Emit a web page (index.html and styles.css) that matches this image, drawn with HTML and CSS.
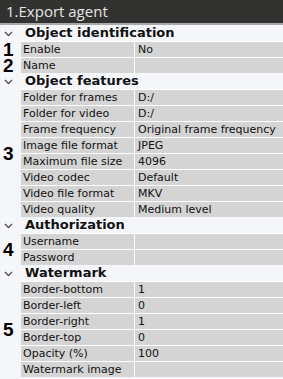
FILE: index.html
```html
<!DOCTYPE html>
<html lang="en">
<head>
  <meta charset="UTF-8" />
  <meta name="viewport" content="width=device-width, initial-scale=1.0">
  <title>Export agent</title>
  <link rel="stylesheet" href="styles.css">
</head>
<body>
  <div class="titlebar">1.Export agent</div>

  <div class="section">
    <div class="head"><span class="chev"><svg width="9" height="6" viewBox="0 0 9 6"><polyline points="1,1 4.5,4.5 8,1" /></svg></span>Object identification</div>
    <div class="group">
      <div class="num">1</div>
      <div class="rows">
        <div class="row"><div class="label">Enable</div><div class="value">No</div></div>
      </div>
    </div>
    <div class="group">
      <div class="num">2</div>
      <div class="rows">
        <div class="row"><div class="label">Name</div><div class="value"></div></div>
      </div>
    </div>
  </div>

  <div class="section">
    <div class="head"><span class="chev"><svg width="9" height="6" viewBox="0 0 9 6"><polyline points="1,1 4.5,4.5 8,1" /></svg></span>Object features</div>
    <div class="group">
      <div class="num">3</div>
      <div class="rows">
        <div class="row"><div class="label">Folder for frames</div><div class="value">D:/</div></div>
        <div class="row"><div class="label">Folder for video</div><div class="value">D:/</div></div>
        <div class="row"><div class="label">Frame frequency</div><div class="value">Original frame frequency</div></div>
        <div class="row"><div class="label">Image file format</div><div class="value">JPEG</div></div>
        <div class="row"><div class="label">Maximum file size</div><div class="value">4096</div></div>
        <div class="row"><div class="label">Video codec</div><div class="value">Default</div></div>
        <div class="row"><div class="label">Video file format</div><div class="value">MKV</div></div>
        <div class="row"><div class="label">Video quality</div><div class="value">Medium level</div></div>
      </div>
    </div>
  </div>

  <div class="section">
    <div class="head"><span class="chev"><svg width="9" height="6" viewBox="0 0 9 6"><polyline points="1,1 4.5,4.5 8,1" /></svg></span>Authorization</div>
    <div class="group">
      <div class="num">4</div>
      <div class="rows">
        <div class="row"><div class="label">Username</div><div class="value"></div></div>
        <div class="row"><div class="label">Password</div><div class="value"></div></div>
      </div>
    </div>
  </div>

  <div class="section">
    <div class="head"><span class="chev"><svg width="9" height="6" viewBox="0 0 9 6"><polyline points="1,1 4.5,4.5 8,1" /></svg></span>Watermark</div>
    <div class="group">
      <div class="num">5</div>
      <div class="rows">
        <div class="row"><div class="label">Border-bottom</div><div class="value">1</div></div>
        <div class="row"><div class="label">Border-left</div><div class="value">0</div></div>
        <div class="row"><div class="label">Border-right</div><div class="value">1</div></div>
        <div class="row"><div class="label">Border-top</div><div class="value">0</div></div>
        <div class="row"><div class="label">Opacity (%)</div><div class="value">100</div></div>
        <div class="row"><div class="label">Watermark image</div><div class="value"></div></div>
      </div>
    </div>
  </div>
</body>
</html>
```

FILE: styles.css
```css
* { margin: 0; padding: 0; box-sizing: border-box; }
body {
  background: #f4f6fa;
  font-family: "DejaVu Sans", Verdana, sans-serif;
  font-size: 11px;
  color: #111;
  width: 283px;
  overflow: hidden;
}
.titlebar {
  height: 23px;
  background: #323330;
  color: #e4e4e4;
  font-family: "Open Sans", sans-serif;
  font-size: 15px;
  line-height: 23px;
  padding-left: 6px;
  border-bottom: 2px solid #a9a9ac;
  box-sizing: content-box;
}
.head {
  height: 16px;
  display: flex;
  align-items: center;
  font-weight: bold;
  font-size: 13px;
  line-height: 16px;
  white-space: nowrap;
}
.chev {
  width: 25px;
  flex: none;
  display: flex;
  padding-left: 4px;
  padding-top: 1px;
}
.chev svg {
  fill: none;
  stroke: #555;
  stroke-width: 1.4;
}
.group {
  display: grid;
  grid-template-columns: 21px 1fr;
}
.num {
  display: flex;
  align-items: center;
  padding-left: 3px;
  padding-top: 1px;
  font-family: "Liberation Sans", Arial, sans-serif;
  font-weight: bold;
  font-size: 19px;
  line-height: 14px;
  color: #000;
}
.row {
  display: grid;
  grid-template-columns: 113px 1fr;
  gap: 1px;
  height: 16px;
  border-top: 1px solid #fff;
  background: #fff;
}
.label, .value {
  background: #d4d4d4;
  line-height: 15px;
  white-space: nowrap;
  overflow: hidden;
}
.label { padding-left: 2px; }
.value { padding-left: 3px; }
```
